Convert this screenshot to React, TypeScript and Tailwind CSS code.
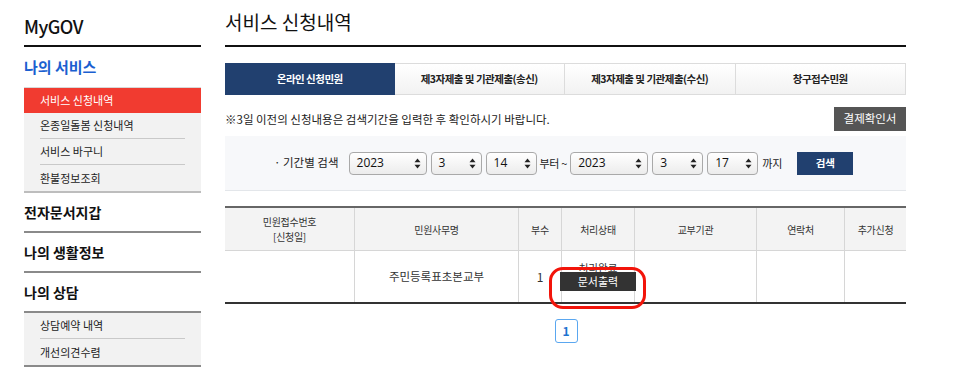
import React from "react";

const FONT = { fontFamily: '"Noto Sans CJK KR", "Noto Sans", sans-serif' };

const TABS = ["온라인 신청민원", "제3자제출 및 기관제출(송신)", "제3자제출 및 기관제출(수신)", "창구접수민원"];

const COLS = [
  { w: "w-[129px]", label: ["민원접수번호", "[신청일]"] },
  { w: "w-[164px]", label: ["민원사무명"] },
  { w: "w-[43px]", label: ["부수"] },
  { w: "w-[73px]", label: ["처리상태"] },
  { w: "w-[122px]", label: ["교부기관"] },
  { w: "w-[88px]", label: ["연락처"] },
  { w: "w-[62px]", label: ["추가신청"] },
];

function FakeSelect({ value, w }: { value: string; w: string }) {
  return (
    <div
      className={`${w} flex h-[23px] items-center justify-between rounded-[4px] border border-[#a9a9a9] bg-gradient-to-b from-white to-[#ececec] pl-[7px] pr-[5px] text-[12px] text-[#111]`}
      style={{ fontFamily: '"Open Sans", "DejaVu Sans", sans-serif' }}
    >
      <span>{value}</span>
      <svg width="7" height="11" viewBox="0 0 7 11">
        <path d="M3.5 0.5 L6.5 4.2 L0.5 4.2 Z" fill="#222" />
        <path d="M3.5 10.5 L6.5 6.8 L0.5 6.8 Z" fill="#222" />
      </svg>
    </div>
  );
}

function SubItem({ text, last }: { text: string; last?: boolean }) {
  return (
    <div className="px-[16px]">
      <div className={`flex h-[26px] items-center text-[11px] text-[#222] ${last ? "" : "border-b border-[#c9c9c9]"}`}>{text}</div>
    </div>
  );
}

export default function App() {
  return (
    <div className="flex h-[375px] w-[966px] overflow-hidden bg-white" style={FONT}>
      {/* sidebar */}
      <aside className="ml-[24px] w-[177px] shrink-0">
        <div className="flex h-[47px] items-end border-b-2 border-[#111] pb-[5px] text-[18px] font-medium tracking-[-0.5px] text-[#111]">
          MyGOV
        </div>
        <div className="flex h-[40px] items-center text-[15px] font-bold text-[#1b5fd0]">나의 서비스</div>
        <div className="flex h-[26px] items-center border-t border-[#d8d8d8] bg-[#f13b30] pl-[16px] text-[11px] text-white">
          서비스 신청내역
        </div>
        <div className="border-b-2 border-[#bdbdbd] bg-[#f2f2f2]">
          <SubItem text="온종일돌봄 신청내역" />
          <SubItem text="서비스 바구니" />
          <SubItem text="환불정보조회" last />
        </div>
        <div className="flex h-[40px] items-center border-b-2 border-[#8a8a8a] text-[14px] font-bold text-[#111]">전자문서지갑</div>
        <div className="flex h-[40px] items-center border-b-2 border-[#8a8a8a] text-[14px] font-bold text-[#111]">나의 생활정보</div>
        <div className="flex h-[40px] items-center border-b-2 border-[#8a8a8a] text-[14px] font-bold text-[#111]">나의 상담</div>
        <div className="border-b-2 border-[#8a8a8a] bg-[#f2f2f2]">
          <SubItem text="상담예약 내역" />
          <SubItem text="개선의견수렴" last />
        </div>
      </aside>

      {/* main */}
      <main className="ml-[24px] w-[681px] shrink-0">
        <div className="flex h-[47px] items-end border-b-2 border-[#111] pb-[9px] text-[19px] text-[#111]">서비스 신청내역</div>

        <div className="mt-[16px] flex h-[32px]">
          {TABS.map((t, i) => (
            <div
              key={t}
              className={`flex flex-1 items-center justify-center text-[10.5px] font-bold tracking-[-0.5px] ${
                i === 0
                  ? "bg-[#21406f] text-white"
                  : "border border-l-0 border-[#dcdcdc] bg-gradient-to-b from-white to-[#f2f2f2] text-[#222]"
              }`}
            >
              {t}
            </div>
          ))}
        </div>

        <div className="mt-[12px] flex h-[24px] items-center justify-between">
          <span className="pt-[2px] text-[11.5px] text-[#222]">※3일 이전의 신청내용은 검색기간을 입력한 후 확인하시기 바랍니다.</span>
          <span className="flex h-[24px] w-[72px] items-center justify-center bg-[#555] text-[11.5px] text-white">결제확인서</span>
        </div>

        <div className="mt-[5px] flex h-[55px] items-center border-b border-[#e3e6ea] bg-[#f7f8fa] pl-[49px] text-[12px] text-[#222]">
          <span className="mr-[10px] text-[11.5px]">· 기간별 검색</span>
          <div className="flex items-center gap-[4px]">
            <FakeSelect value="2023" w="w-[78px]" />
            <FakeSelect value="3" w="w-[51px]" />
            <FakeSelect value="14" w="w-[51px]" />
            <span className="mx-[-1px] text-[11px] tracking-[-0.3px]">부터 ~</span>
            <FakeSelect value="2023" w="w-[78px]" />
            <FakeSelect value="3" w="w-[51px]" />
            <FakeSelect value="17" w="w-[51px]" />
            <span className="text-[11px]">까지</span>
            <span className="ml-[11px] flex h-[23px] w-[56px] items-center justify-center bg-[#21406f] text-[10.5px] font-bold text-white">
              검색
            </span>
          </div>
        </div>

        {/* table */}
        <div className="mt-[15px] border-y-2 border-t-[#666] border-b-[#333]">
          <div className="flex h-[43px] border-b border-[#d6d6d6] bg-[#f3f3f3]">
            {COLS.map((c, i) => (
              <div
                key={i}
                className={`${c.w} flex flex-col items-center justify-center text-[10px] leading-[15px] tracking-[-0.3px] text-[#333] ${
                  i > 0 ? "border-l border-[#d6d6d6]" : ""
                }`}
              >
                {c.label.map((l) => (
                  <span key={l}>{l}</span>
                ))}
              </div>
            ))}
          </div>
          <div className="flex h-[51px]">
            <div className="w-[129px]" />
            <div className="flex w-[164px] items-center justify-center border-l border-[#d6d6d6] text-[11.5px] text-[#333]">
              주민등록표초본교부
            </div>
            <div className="flex w-[43px] items-center justify-center border-l border-[#d6d6d6] text-[12px] text-[#333]">1</div>
            <div className="relative flex w-[73px] flex-col items-center justify-center border-l border-[#d6d6d6]">
              <span className="text-[10.5px] leading-[11px] text-[#333]">처리완료</span>
              <span className="mt-[-1px] flex h-[19px] w-[76px] items-center justify-center bg-[#333] text-[11px] text-white">
                문서출력
              </span>
              <div className="pointer-events-none absolute left-[-13px] top-[16px] h-[42px] w-[97px] rounded-[14px] border-[3px] border-[#f2140a]" />
            </div>
            <div className="w-[122px] border-l border-[#d6d6d6]" />
            <div className="w-[88px] border-l border-[#d6d6d6]" />
            <div className="w-[62px] border-l border-[#d6d6d6]" />
          </div>
        </div>

        <div className="mt-[15px] flex justify-center pl-[1px]">
          <span className="flex h-[24px] w-[23px] items-center justify-center rounded-[3px] border border-[#5aa7f0] text-[12px] font-bold text-[#1d73d0]">
            1
          </span>
        </div>
      </main>
    </div>
  );
}
